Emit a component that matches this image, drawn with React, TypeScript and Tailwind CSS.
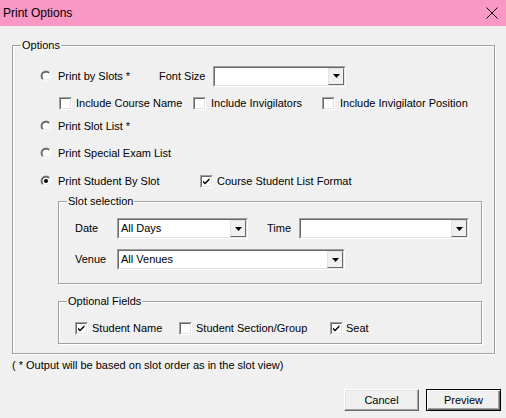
import React from 'react'

function Radio({ checked = false }: { checked?: boolean }) {
  return (
    <svg width="12" height="12" viewBox="0 0 12 12" className="shrink-0">
      <defs>
        <linearGradient id="rg" x1="0" y1="0" x2="1" y2="1">
          <stop offset="0.45" stopColor="#8a8a8a" />
          <stop offset="0.55" stopColor="#ffffff" />
        </linearGradient>
        <linearGradient id="rg2" x1="0" y1="0" x2="1" y2="1">
          <stop offset="0.45" stopColor="#404040" />
          <stop offset="0.55" stopColor="#e3e3e3" />
        </linearGradient>
      </defs>
      <circle cx="6" cy="6" r="5.5" fill="url(#rg)" />
      <circle cx="6" cy="6" r="4.5" fill="url(#rg2)" />
      <circle cx="6" cy="6" r="3.6" fill="#ffffff" />
      {checked && <circle cx="6" cy="6" r="2" fill="#000000" />}
    </svg>
  )
}

function Check({ checked = false }: { checked?: boolean }) {
  return (
    <div className="w-[13px] h-[13px] shrink-0 border border-t-[#a0a0a0] border-l-[#a0a0a0] border-b-white border-r-white">
      <div className="w-full h-full border border-t-[#696969] border-l-[#696969] border-b-[#e3e3e3] border-r-[#e3e3e3] bg-white">
        {checked && (
          <svg width="9" height="9" viewBox="0 0 9 9">
            <path d="M1 3.5 L3 5.5 L7.5 1 L7.5 3 L3 7.5 L1 5.5 Z" fill="#000" />
          </svg>
        )}
      </div>
    </div>
  )
}

function Combo({ w, value = '' }: { w: string; value?: string }) {
  return (
    <div className={`${w} h-[21px] shrink-0 border border-t-[#a0a0a0] border-l-[#a0a0a0] border-b-white border-r-white`}>
      <div className="w-full h-full flex border border-t-[#696969] border-l-[#696969] border-b-[#e3e3e3] border-r-[#e3e3e3] bg-white">
        <div className="flex-1 pl-[2px] leading-[17px] text-black">{value}</div>
        <div className="w-[16px] h-[17px] border border-t-[#e3e3e3] border-l-[#e3e3e3] border-b-[#696969] border-r-[#696969] bg-[#f0f0f0] flex items-center justify-center">
          <svg width="7" height="4" viewBox="0 0 7 4">
            <path d="M0 0 H7 L3.5 4 Z" fill="#000" />
          </svg>
        </div>
      </div>
    </div>
  )
}

function Group({ label, className, children }: { label: string; className: string; children: React.ReactNode }) {
  return (
    <fieldset className={`border border-[#a0a0a0] shadow-[inset_1px_1px_0_#ffffff,1px_1px_0_#ffffff] ${className}`}>
      <legend className="ml-[8px] px-[1px] leading-[13px]">{label}</legend>
      {children}
    </fieldset>
  )
}

export default function App() {
  return (
    <div className="w-[506px] h-[418px] bg-[#f0f0f0] flex flex-col font-['Liberation_Sans',Arial,sans-serif] text-[11px] text-black">
      <div className="h-[26px] bg-[#f997c5] flex items-center justify-between pl-[3px] shrink-0">
        <span className="text-[12px]">Print Options</span>
        <svg width="12" height="12" viewBox="0 0 12 12" className="mr-[8px]">
          <path d="M0.5 0.5 L11.5 11.5 M11.5 0.5 L0.5 11.5" stroke="#000" strokeWidth="1" />
        </svg>
      </div>

      <Group label="Options" className="mt-[13px] ml-[12px] w-[483px] pb-[9px]">
        <div className="mt-[13px] h-[22px] flex items-center">
          <div className="ml-[27px] w-[119px] flex items-center gap-[6px]">
            <Radio />
            <span>Print by Slots *</span>
          </div>
          <span className="w-[54px]">Font Size</span>
          <Combo w="w-[133px]" />
        </div>

        <div className="mt-[8px] h-[16px] flex items-center">
          <div className="ml-[46px] w-[134px] flex items-center gap-[4px]">
            <Check />
            <span>Include Course Name</span>
          </div>
          <div className="w-[129px] flex items-center gap-[5px]">
            <Check />
            <span>Include Invigilators</span>
          </div>
          <div className="flex items-center gap-[5px]">
            <Check />
            <span>Include Invigilator Position</span>
          </div>
        </div>

        <div className="mt-[7px] h-[16px] flex items-center ml-[27px] gap-[6px]">
          <Radio />
          <span>Print Slot List *</span>
        </div>

        <div className="mt-[11px] h-[16px] flex items-center ml-[27px] gap-[6px]">
          <Radio />
          <span>Print Special Exam List</span>
        </div>

        <div className="mt-[12px] h-[16px] flex items-center">
          <div className="ml-[27px] w-[160px] flex items-center gap-[6px]">
            <Radio checked />
            <span>Print Student By Slot</span>
          </div>
          <div className="flex items-center gap-[4px]">
            <Check checked />
            <span>Course Student List Format</span>
          </div>
        </div>

        <Group label="Slot selection" className="mt-[6px] ml-[45px] w-[424px] pb-[13px]">
          <div className="mt-[10px] flex items-center pl-[16px]">
            <span className="w-[42px]">Date</span>
            <Combo w="w-[131px]" value="All Days" />
            <span className="ml-[19px] w-[32px]">Time</span>
            <Combo w="w-[170px]" />
          </div>
          <div className="mt-[10px] flex items-center pl-[16px]">
            <span className="w-[42px]">Venue</span>
            <Combo w="w-[228px]" value="All Venues" />
          </div>
        </Group>

        <Group label="Optional Fields" className="mt-[11px] ml-[45px] w-[424px] pb-[7px]">
          <div className="mt-[12px] h-[16px] flex items-center pl-[16px]">
            <div className="w-[104px] flex items-center gap-[4px]">
              <Check checked />
              <span>Student Name</span>
            </div>
            <div className="w-[151px] flex items-center gap-[4px]">
              <Check />
              <span>Student Section/Group</span>
            </div>
            <div className="flex items-center gap-[3px]">
              <Check checked />
              <span>Seat</span>
            </div>
          </div>
        </Group>
      </Group>

      <div className="mt-[3px] ml-[12px] h-[16px] flex items-center">( * Output will be based on slot order as in the slot view)</div>

      <div className="mt-[16px] flex justify-end gap-[7px] pr-[5px]">
        <button className="w-[75px] h-[22px] bg-[#f0f0f0] border border-t-white border-l-white border-b-[#696969] border-r-[#696969] shadow-[inset_-1px_-1px_0_#a0a0a0,inset_1px_1px_0_#e3e3e3]">
          Cancel
        </button>
        <button className="w-[75px] h-[22px] bg-[#f0f0f0] border border-black shadow-[inset_1px_1px_0_#fff,inset_-1px_-1px_0_#696969,inset_-2px_-2px_0_#a0a0a0]">
          Preview
        </button>
      </div>
    </div>
  )
}
